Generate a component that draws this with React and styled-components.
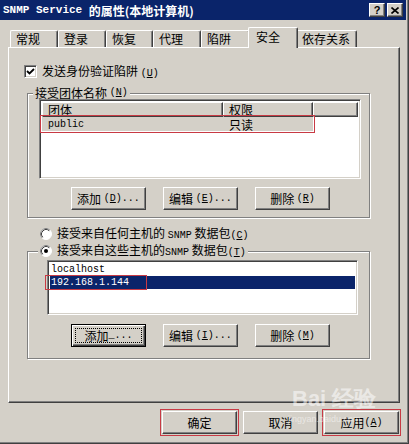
import styled, { createGlobalStyle, css } from 'styled-components'

const GlobalStyle = createGlobalStyle`
  html, body { margin: 0; padding: 0; background: #d4d0c8; }
  body {
    font-family: "Noto Sans CJK SC", "Liberation Sans", sans-serif;
    font-size: 12px;
    color: #000;
  }
`

const Window = styled.div`
  position: relative;
  box-sizing: border-box;
  width: 409px;
  height: 444px;
  display: flex;
  flex-direction: column;
  background: #d4d0c8;
  border-right: 1px solid #404040;
  border-bottom: 1px solid #404040;
  box-shadow: inset -1px -1px #808080;
  padding: 0 2px 2px 0;
  overflow: hidden;
`

const TitleBar = styled.div`
  height: 20px;
  display: flex;
  align-items: center;
  justify-content: space-between;
  padding: 0 3px 0 3px;
  background: #0a246a;
  color: #fff;
  font-weight: bold;
`

const TitleText = styled.div`
  display: flex;
  align-items: center;
  font-size: 12px;
  white-space: pre;
`

const Mono = styled.span`
  font-family: "Liberation Mono", "DejaVu Sans Mono", monospace;
  font-size: ${p => p.$size || 10}px;
`

const TitleButtons = styled.div`
  display: flex;
  gap: 2px;
`

const TitleButton = styled.div`
  box-sizing: border-box;
  width: 16px;
  height: 14px;
  display: flex;
  align-items: center;
  justify-content: center;
  background: #d4d0c8;
  color: #000;
  border: 1px solid;
  border-color: #fff #404040 #404040 #fff;
  box-shadow: inset -1px -1px #808080;
  font: bold 11px "Liberation Sans", sans-serif;
`

const Body = styled.div`
  flex: 1;
  display: flex;
  flex-direction: column;
  padding: 7px 6px 0 8px;
`

const Tabs = styled.div`
  display: flex;
  align-items: flex-end;
  height: 20px;
  padding-left: 2px;
`

const Tab = styled.div`
  position: relative;
  box-sizing: border-box;
  width: ${p => p.$w}px;
  height: 17px;
  padding: 1px 0 0 5px;
  line-height: 14px;
  background: #d4d0c8;
  border-top: 1px solid #fff;
  border-left: 1px solid #fff;
  border-right: 1px solid #404040;
  border-radius: 2px 2px 0 0;
  box-shadow: inset -1px 0 #808080;
  white-space: nowrap;
  ${p => p.$active && css`
    z-index: 1;
    height: 21px;
    margin: 0 -2px -1px;
    padding: 2px 0 0 7px;
  `}
`

const Panel = styled.div`
  box-sizing: border-box;
  height: 356px;
  display: flex;
  flex-direction: column;
  align-items: flex-start;
  padding: 17px 0 0 18px;
  border: 1px solid;
  border-color: #fff #404040 #404040 #fff;
  box-shadow: inset -1px -1px #808080;
`

const CheckRow = styled.label`
  display: flex;
  align-items: center;
  gap: 5px;
  height: 13px;
  margin-left: -3px;
  line-height: 13px;
  white-space: pre;
`

const CheckBox = styled.span`
  box-sizing: border-box;
  width: 13px;
  height: 13px;
  display: flex;
  align-items: center;
  justify-content: center;
  background: #fff;
  border: 1px solid;
  border-color: #808080 #fff #fff #808080;
  box-shadow: inset 1px 1px #404040, inset -1px -1px #d4d0c8;
`

const RadioRow = styled.div`
  display: flex;
  align-items: center;
  gap: 5px;
  height: 12px;
  line-height: 12px;
  margin-left: ${p => p.$indent || 0}px;
  margin-top: ${p => p.$top || 0}px;
  white-space: pre;
`

const Group = styled.fieldset`
  box-sizing: border-box;
  width: 343px;
  min-inline-size: auto;
  margin: ${p => p.$top}px 0 0 0;
  padding: ${p => p.$pad};
  border: 1px solid #808080;
  box-shadow: 1px 1px 0 #fff, inset 1px 1px 0 #fff;
`

const Legend = styled.legend`
  display: flex;
  align-items: center;
  height: 12px;
  padding: 0 2px;
  margin-left: ${p => p.$indent}px;
  line-height: 12px;
  background: #d4d0c8;
  white-space: pre;
`

const Sunken = styled.div`
  box-sizing: border-box;
  width: ${p => p.$w}px;
  height: ${p => p.$h}px;
  padding: 2px;
  background: #fff;
  border: 1px solid;
  border-color: #808080 #fff #fff #808080;
  box-shadow: inset 1px 1px #404040, inset -1px -1px #d4d0c8;
`

const HeaderRow = styled.div`
  display: grid;
  grid-template-columns: 181px 90px 1fr;
  height: 15px;
`

const HeaderCell = styled.div`
  box-sizing: border-box;
  height: 15px;
  padding-left: 5px;
  line-height: 13px;
  background: #d4d0c8;
  border: 1px solid;
  border-color: #fff #404040 #404040 #fff;
  box-shadow: inset -1px -1px #808080;
`

const ListRow = styled.div`
  display: grid;
  grid-template-columns: 181px 90px;
  align-items: center;
  width: 271px;
  height: 14px;
  background: #d4d0c8;
  outline: 1px solid #c83a44;
  outline-offset: 1px;
`

const Cell = styled.div`
  padding-left: 6px;
  line-height: 13px;
  ${p => p.$mono && css`
    font-family: "Liberation Mono", "DejaVu Sans Mono", monospace;
    font-size: 10px;
  `}
`

const Item = styled.div`
  height: 13px;
  line-height: 13px;
  padding-left: 1px;
  font-family: "Liberation Mono", "DejaVu Sans Mono", monospace;
  font-size: 10px;
  ${p => p.$selected && css`
    background: #0a246a;
    color: #fff;
  `}
`

const Marked = styled.span`
  position: relative;
  &::after {
    content: "";
    position: absolute;
    inset: -2px -18px -2px -6px;
    border: 1px solid #c83a44;
  }
`

const ButtonRow = styled.div`
  display: flex;
  gap: ${p => p.$gap || 17}px;
  margin-top: ${p => p.$top}px;
  padding-left: ${p => p.$indent}px;
`

const Button = styled.button`
  box-sizing: border-box;
  width: 75px;
  height: 23px;
  padding: 3px;
  display: flex;
  font: 12px "Noto Sans CJK SC", "Liberation Sans", sans-serif;
  color: #000;
  background: #d4d0c8;
  border: 1px solid;
  border-color: #fff #404040 #404040 #fff;
  box-shadow: inset -1px -1px #808080;
  ${p => p.$default && css`
    border: 1px solid #000;
    box-shadow: inset 1px 1px #fff, inset -1px -1px #404040, inset -2px -2px #808080;
  `}
  ${p => p.$marked && css`
    outline: 1px solid #c83a44;
    outline-offset: 1px;
  `}
`

const ButtonLabel = styled.span`
  flex: 1;
  display: flex;
  align-items: center;
  justify-content: center;
  line-height: 14px;
  border: 1px dotted ${p => (p.$focus ? '#000' : 'transparent')};
  white-space: pre;
`

const Footer = styled.div`
  display: flex;
  justify-content: flex-end;
  gap: 6px;
  margin-top: 8px;
  padding-right: 1px;
`

const Watermark = styled.div`
  position: absolute;
  left: 292px;
  top: 384px;
  color: rgba(255, 255, 255, 0.55);
  font: bold 22px "Liberation Sans", sans-serif;
  pointer-events: none;
  display: flex;
  flex-direction: column;
  align-items: flex-start;
`

const WatermarkSmall = styled.span`
  margin-left: -4px;
  font: 9px "Liberation Sans", sans-serif;
  color: rgba(255, 255, 255, 0.5);
`

function Key({ k }) {
  return (
    <Mono>
      (<u>{k}</u>)
    </Mono>
  )
}

function Radio({ checked }) {
  return (
    <svg width="12" height="12" viewBox="0 0 12 12">
      <circle cx="6" cy="6" r="5.5" fill="#fff" stroke="#fff" />
      <path d="M2.11 9.89 A5.5 5.5 0 0 1 9.89 2.11" stroke="#808080" fill="none" />
      <path d="M2.82 9.18 A4.5 4.5 0 0 1 9.18 2.82" stroke="#404040" fill="none" />
      {checked && <circle cx="6" cy="6" r="2" fill="#000" />}
    </svg>
  )
}

const tabs = [
  ['常规', 48], ['登录', 48], ['恢复', 47], ['代理', 48], ['陷阱', 49], ['安全', 50], ['依存关系', 61],
]

export default function App() {
  return (
    <>
      <GlobalStyle />
      <Window>
        <TitleBar>
          <TitleText>
            <Mono $size={11}>SNMP Service </Mono>的属性(本地计算机)
          </TitleText>
          <TitleButtons>
            <TitleButton>?</TitleButton>
            <TitleButton>
              <svg width="8" height="7" viewBox="0 0 8 7">
                <path d="M0.5 0.5 L7.5 6.5 M7.5 0.5 L0.5 6.5" stroke="#000" strokeWidth="1.6" />
              </svg>
            </TitleButton>
          </TitleButtons>
        </TitleBar>

        <Body>
          <Tabs>
            {tabs.map(([name, w]) => (
              <Tab key={name} $w={w} $active={name === '安全'}>{name}</Tab>
            ))}
          </Tabs>

          <Panel>
            <CheckRow>
              <CheckBox>
                <svg width="9" height="9" viewBox="0 0 9 9">
                  <path d="M1 4 L3.5 6.5 L8 2" stroke="#000" strokeWidth="1.8" fill="none" />
                </svg>
              </CheckBox>
              <span>发送身份验证陷阱 <Key k="U" /></span>
            </CheckRow>

            <Group $top={9} $pad="0 8px 7px 11px">
              <Legend $indent={-6}>接受团体名称 <Key k="N" /></Legend>
              <Sunken $w={322} $h={80}>
                <HeaderRow>
                  <HeaderCell>团体</HeaderCell>
                  <HeaderCell>权限</HeaderCell>
                  <HeaderCell />
                </HeaderRow>
                <ListRow>
                  <Cell $mono>public</Cell>
                  <Cell>只读</Cell>
                </ListRow>
              </Sunken>
              <ButtonRow $top={8} $indent={32}>
                <Button><ButtonLabel>添加 <Key k="D" /><Mono>...</Mono></ButtonLabel></Button>
                <Button><ButtonLabel>编辑 <Key k="E" /><Mono>...</Mono></ButtonLabel></Button>
                <Button><ButtonLabel>删除 <Key k="R" /></ButtonLabel></Button>
              </ButtonRow>
            </Group>

            <RadioRow $indent={13} $top={10}>
              <Radio />
              <span>接受来自任何主机的 <Mono>SNMP</Mono> 数据包<Key k="C" /></span>
            </RadioRow>

            <Group $top={5} $pad="3px 0 11px 19px">
              <Legend $indent={-9}>
                <RadioRow>
                  <Radio checked />
                  <span>接受来自这些主机的<Mono>SNMP</Mono> 数据包<Key k="T" /></span>
                </RadioRow>
              </Legend>
              <Sunken $w={311} $h={55}>
                <Item>localhost</Item>
                <Item $selected><Marked>192.168.1.144</Marked></Item>
              </Sunken>
              <ButtonRow $top={9} $indent={24}>
                <Button $default><ButtonLabel $focus>添加<Mono>_...</Mono></ButtonLabel></Button>
                <Button><ButtonLabel>编辑 <Key k="I" /><Mono>...</Mono></ButtonLabel></Button>
                <Button><ButtonLabel>删除 <Key k="M" /></ButtonLabel></Button>
              </ButtonRow>
            </Group>
          </Panel>

          <Footer>
            <Button $marked><ButtonLabel>确定</ButtonLabel></Button>
            <Button><ButtonLabel>取消</ButtonLabel></Button>
            <Button $marked><ButtonLabel>应用<Key k="A" /></ButtonLabel></Button>
          </Footer>
        </Body>

        <Watermark>
          <span>Bai 经验</span>
          <WatermarkSmall>jingyan.baidu.com</WatermarkSmall>
        </Watermark>
      </Window>
    </>
  )
}
